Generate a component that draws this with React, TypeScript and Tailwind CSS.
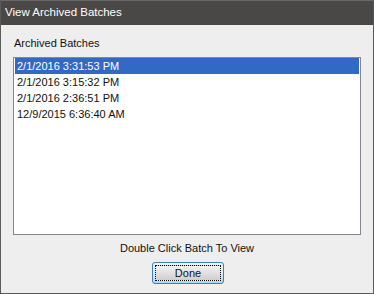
const batches = [
  "2/1/2016 3:31:53 PM",
  "2/1/2016 3:15:32 PM",
  "2/1/2016 2:36:51 PM",
  "12/9/2015 6:36:40 AM",
];

export default function App() {
  return (
    <div className="w-[374px] h-[294px] flex flex-col bg-[#eeeeee] border-r border-b border-l border-[#5a5a5a] font-['Liberation_Sans',Arial,sans-serif] text-[#111]">
      {/* title bar */}
      <div className="h-[25px] shrink-0 bg-[#4a4846] border-t border-[#6a6866] flex items-center px-[4px] text-[11.5px] text-white">
        View Archived Batches
      </div>

      <div className="flex-1 flex flex-col px-[12px] pt-[11px]">
        <div className="text-[11px] leading-[15px] pl-[1px]">Archived Batches</div>

        <div className="mt-[6px] h-[178px] bg-white border border-[#828790] px-[1px]">
          {batches.map((b, i) => (
            <div
              key={b}
              className={`h-[16px] leading-[16px] text-[11px] pl-[2px] ${i === 0 ? "bg-[#3169c6] text-white" : ""}`}
            >
              {b}
            </div>
          ))}
        </div>

        <div className="mt-[6px] text-center text-[11px] leading-[15px]">Double Click Batch To View</div>

        <div className="mt-[6px] flex justify-center">
          <button className="w-[72px] h-[22px] rounded-[3px] border border-[#3c7fb1] bg-gradient-to-b from-[#eaf6fd] via-[#d9f0fc] to-[#a7d9f5] p-[2px] ml-[2px]">
            <div className="w-full h-full border border-dotted border-black flex items-center justify-center text-[11px] leading-none bg-gradient-to-b from-[#f2f2f2] via-[#e0e0e0] to-[#cfcfcf]">
              Done
            </div>
          </button>
        </div>
      </div>
    </div>
  );
}
